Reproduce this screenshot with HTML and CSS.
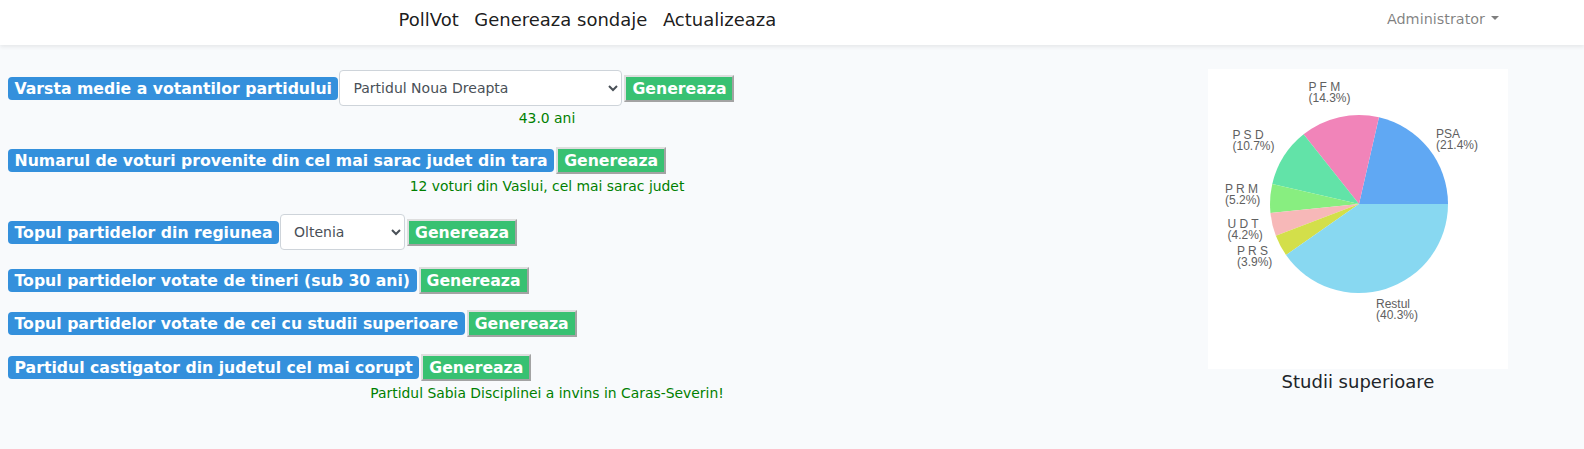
FILE: index.html
```html
<!DOCTYPE html>
<html lang="ro">
<head>
<meta charset="utf-8">
<title>PollVot</title>
<link rel="stylesheet" href="styles.css">
</head>
<body>
<nav class="navbar">
  <div class="nav-left">
    <a class="brand" href="#">PollVot</a>
    <a class="brand" href="#">Genereaza sondaje</a>
    <a class="brand" href="#">Actualizeaza</a>
  </div>
  <div class="nav-right">
    <a class="user" href="#">Administrator<span class="caret"></span></a>
  </div>
</nav>
<main class="page">
  <section class="queries">
    <div class="block">
      <div class="query">
        <span class="label">Varsta medie a votantilor partidului</span>
        <select class="select select-party"><option>Partidul Noua Dreapta</option></select>
        <button class="btn">Genereaza</button>
      </div>
      <p class="result">43.0 ani</p>
    </div>
    <div class="block">
      <div class="query">
        <span class="label">Numarul de voturi provenite din cel mai sarac judet din tara</span>
        <button class="btn">Genereaza</button>
      </div>
      <p class="result">12 voturi din Vaslui, cel mai sarac judet</p>
    </div>
    <div class="block">
      <div class="query">
        <span class="label">Topul partidelor din regiunea</span>
        <select class="select select-region"><option>Oltenia</option></select>
        <button class="btn">Genereaza</button>
      </div>
    </div>
    <div class="block">
      <div class="query">
        <span class="label">Topul partidelor votate de tineri (sub 30 ani)</span>
        <button class="btn">Genereaza</button>
      </div>
    </div>
    <div class="block">
      <div class="query">
        <span class="label">Topul partidelor votate de cei cu studii superioare</span>
        <button class="btn">Genereaza</button>
      </div>
    </div>
    <div class="block">
      <div class="query">
        <span class="label">Partidul castigator din judetul cel mai corupt</span>
        <button class="btn">Genereaza</button>
      </div>
      <p class="result">Partidul Sabia Disciplinei a invins in Caras-Severin!</p>
    </div>
  </section>
  <aside class="chart-col">
    <div class="chart">
      <svg class="pie" width="300" height="300" viewBox="0 0 300 300">
        <path d="M151,135 L240,135 A89,89 0 0 0 170.96,48.27 Z" fill="#60a8f3"/>
        <path d="M151,135 L170.96,48.27 A89,89 0 0 0 95.60,65.35 Z" fill="#f184b9"/>
        <path d="M151,135 L95.60,65.35 A89,89 0 0 0 64.27,115.04 Z" fill="#62e3a8"/>
        <path d="M151,135 L64.27,115.04 A89,89 0 0 0 62.45,143.93 Z" fill="#88ee80"/>
        <path d="M151,135 L62.45,143.93 A89,89 0 0 0 67.84,166.72 Z" fill="#f7b8b8"/>
        <path d="M151,135 L67.84,166.72 A89,89 0 0 0 78.03,185.95 Z" fill="#d3df4a"/>
        <path d="M151,135 L78.03,185.95 A89,89 0 0 0 240,135 Z" fill="#88d8f1"/>
        <g class="pie-labels">
          <text x="100.5" y="22"><tspan x="100.5">P F M</tspan><tspan x="100.5" dy="11">(14.3%)</tspan></text>
          <text x="228" y="68.5"><tspan x="228">PSA</tspan><tspan x="228" dy="11">(21.4%)</tspan></text>
          <text x="24.5" y="70"><tspan x="24.5">P S D</tspan><tspan x="24.5" dy="11">(10.7%)</tspan></text>
          <text x="17" y="123.5"><tspan x="17">P R M</tspan><tspan x="17" dy="11">(5.2%)</tspan></text>
          <text x="19.5" y="158.5"><tspan x="19.5">U D T</tspan><tspan x="19.5" dy="11">(4.2%)</tspan></text>
          <text x="29" y="186"><tspan x="29">P R S</tspan><tspan x="29" dy="11">(3.9%)</tspan></text>
          <text x="168" y="238.5"><tspan x="168">Restul</tspan><tspan x="168" dy="11">(40.3%)</tspan></text>
        </g>
      </svg>
    </div>
    <p class="chart-title">Studii superioare</p>
  </aside>
</main>
</body>
</html>
```

FILE: styles.css
```css
* {
  box-sizing: border-box;
}

html, body {
  margin: 0;
  padding: 0;
}

body {
  background: #f8fafc;
  font-family: "DejaVu Sans", sans-serif;
  font-size: 14.4px;
  color: #212529;
}

a {
  text-decoration: none;
}

.navbar {
  height: 45px;
  background: #ffffff;
  box-shadow: 0 2px 4px rgba(0, 0, 0, 0.075);
  display: flex;
  align-items: flex-start;
  padding-left: 398.5px;
  padding-right: 85px;
}

.nav-left {
  display: flex;
  gap: 15.5px;
  margin-top: 6px;
}

.brand {
  font-size: 18px;
  line-height: 27px;
  color: rgba(0, 0, 0, 0.9);
  white-space: nowrap;
}

.nav-right {
  margin-left: auto;
  margin-top: 8px;
}

.user {
  font-size: 14.4px;
  line-height: 22px;
  color: rgba(0, 0, 0, 0.5);
  white-space: nowrap;
}

.caret {
  display: inline-block;
  margin-left: 6px;
  vertical-align: 0.255em;
  border-top: 0.3em solid;
  border-right: 0.3em solid transparent;
  border-left: 0.3em solid transparent;
  border-bottom: 0;
}

.page {
  display: flex;
  align-items: flex-start;
  padding-top: 24px;
}

.queries {
  margin-left: 8px;
  width: 1078px;
  flex: none;
  padding-top: 1px;
}

.block {
  margin-bottom: 16.5px;
}

.query {
  display: flex;
  align-items: center;
  gap: 2px;
}

.label {
  background: #3490dc;
  color: #ffffff;
  font-weight: bold;
  font-size: 15.7px;
  line-height: 23px;
  padding: 0 6.5px;
  border-radius: 4px;
  white-space: nowrap;
}

.select {
  height: 36px;
  background-color: #ffffff;
  border: 1px solid #ced4da;
  border-radius: 4px;
  color: #495057;
  font-family: "DejaVu Sans", sans-serif;
  font-size: 14px;
  padding: 0 6px 0 9px;
  margin-left: -1px;
}

.select-party {
  width: 283px;
}

.select-region {
  width: 125px;
}

.btn {
  background: #38c172;
  color: #ffffff;
  font-family: "DejaVu Sans", sans-serif;
  font-weight: bold;
  font-size: 15.7px;
  line-height: 23px;
  padding: 0 6px;
  border-width: 2px;
  border-style: solid;
  border-color: #dedede #a3a3a3 #a3a3a3 #dedede;
  border-radius: 0;
  white-space: nowrap;
}

.result {
  margin: 0;
  text-align: center;
  color: #008000;
  font-size: 13.9px;
  line-height: 24px;
}

.chart-col {
  flex: 1;
  padding-left: 46px;
  display: flex;
  flex-direction: column;
  align-items: center;
}

.chart {
  width: 300px;
  height: 300px;
  background: #ffffff;
}

.pie {
  display: block;
}

.pie-labels {
  font-family: "Liberation Sans", Arial, sans-serif;
  font-size: 12px;
  fill: #606060;
}

.chart-title {
  margin: 0;
  font-size: 18px;
  line-height: 25px;
  color: #212529;
}
```
